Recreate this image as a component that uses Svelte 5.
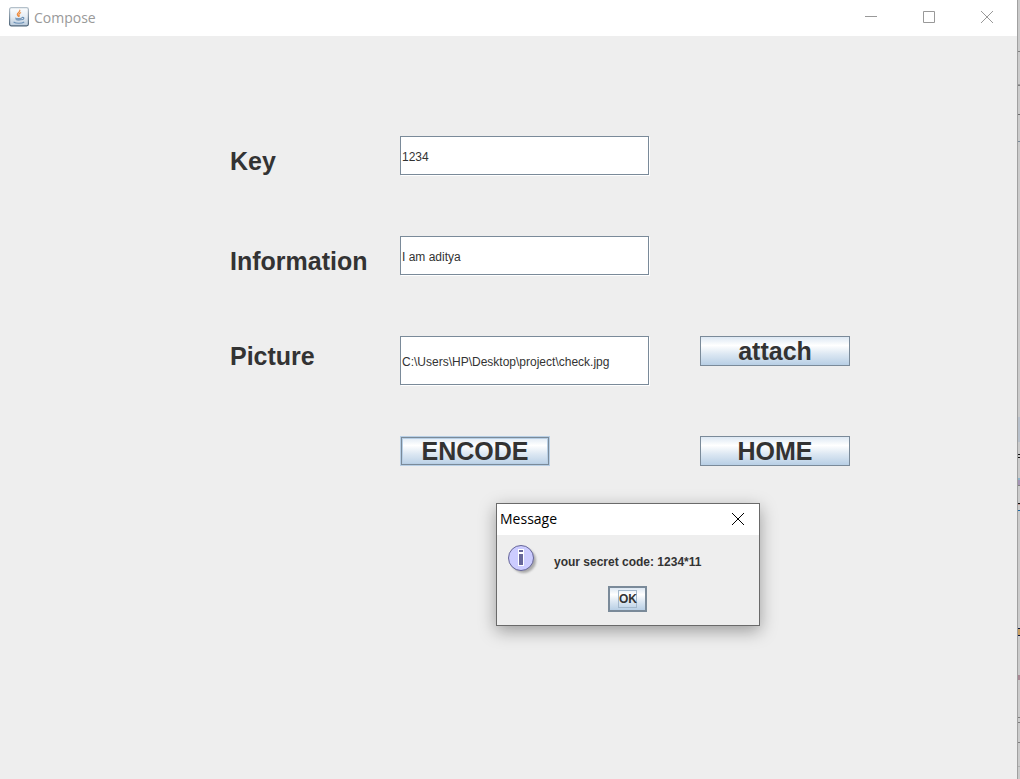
<script>
  let key = $state('1234');
  let info = $state('I am aditya');
  let picture = $state('C:\\Users\\HP\\Desktop\\project\\check.jpg');
  let open = $state(true);

  // slivers of the window that lies behind: [top, height, colour]
  const slivers = [
    [51, 1, '#808080'], [84, 1, '#a0a0a0'], [85, 1, '#808080'], [114, 1, '#6e6e6e'],
    [141, 1, '#7a8a99'], [417, 25, '#b8c0ca'], [454, 1, '#111'], [457, 1, '#111'],
    [478, 2, '#8fb4c8'], [480, 5, '#a595b4'], [485, 1, '#808080'], [503, 1, '#111'],
    [504, 1, '#c49a92'], [510, 1, '#1667a8'], [628, 1, '#101a3c'], [629, 6, '#c99f62'],
    [635, 1, '#101a3c'], [675, 5, '#a98a96'], [717, 1, '#808080'], [722, 1, '#808080'],
    [742, 1, '#808080'], [766, 1, '#b0b0b0']
  ];
</script>

<div class="screen">
  <main class="window">
    <header class="titlebar">
      <svg class="java" width="20" height="20" viewBox="0 0 20 20" aria-hidden="true">
        <defs>
          <linearGradient id="tile" x1="0" y1="0" x2="0" y2="1">
            <stop offset="0" stop-color="#fdfeff" />
            <stop offset="0.5" stop-color="#e6edf4" />
            <stop offset="1" stop-color="#b9cadb" />
          </linearGradient>
          <linearGradient id="rim" x1="0" y1="0" x2="0" y2="1">
            <stop offset="0" stop-color="#b4c0ca" />
            <stop offset="1" stop-color="#4c6378" />
          </linearGradient>
        </defs>
        <rect x="0.6" y="0.6" width="18.8" height="18.2" rx="1.8" fill="url(#tile)" stroke="url(#rim)" stroke-width="1.2" />
        <path d="M10.800 3.200c.8 1.700-3 2.600-2.500 4.400.2.800.8 1.200 1.200 1.800M11.600 5.800c-1.400.7-2.100 1.300-1.600 2.200.3.600.4.900 0 1.500" fill="none" stroke="#ef8a3c" stroke-width="1.200" stroke-linecap="round" />
        <path d="M6 10.500c2 .8 5 .8 7 0l-.6 2.600c-1.600.7-4.200.7-5.600 0z" fill="#7d9dbe" />
        <path d="M13 10.500c2.600-.6 2.400 2-.4 2.300M5 15.200c1.800 1.300 8 1.300 9.800 0" fill="none" stroke="#6b90b6" stroke-width="1.100" stroke-linecap="round" />
      </svg>
      <h1>Compose</h1>
      <div class="controls">
        <button type="button" aria-label="Minimize">
          <svg width="12" height="12" viewBox="0 0 12 12"><path d="M0 5.500h12" /></svg>
        </button>
        <button type="button" aria-label="Maximize">
          <svg width="12" height="12" viewBox="0 0 12 12"><path d="M.5.5h11v11H.5z" /></svg>
        </button>
        <button type="button" aria-label="Close">
          <svg width="12" height="12" viewBox="0 0 12 12"><path d="M0 0l12 12M12 0L0 12" /></svg>
        </button>
      </div>
    </header>

    <form class="form" onsubmit={(e) => e.preventDefault()}>
      <label for="key">Key</label>
      <input id="key" type="text" bind:value={key} />

      <label for="info">Information</label>
      <input id="info" type="text" bind:value={info} />

      <label class="short" for="picture">Picture</label>
      <input class="tall" id="picture" type="text" bind:value={picture} />
      <button class="metal" type="button">attach</button>

      <button class="metal active" type="button" onclick={() => (open = true)}>ENCODE</button>
      <button class="metal" type="button">HOME</button>
    </form>

    {#if open}
      <div class="dialog" role="dialog" aria-labelledby="dialog-title">
        <div class="dialog-bar">
          <h2 id="dialog-title">Message</h2>
          <button type="button" aria-label="Close message" onclick={() => (open = false)}>
            <svg width="12" height="12" viewBox="0 0 12 12"><path d="M0 0l12 12M12 0L0 12" /></svg>
          </button>
        </div>
        <div class="dialog-body">
          <div class="message">
            <svg width="32" height="32" viewBox="0 0 32 32" aria-hidden="true">
              <defs>
                <filter id="soft" x="-20%" y="-20%" width="140%" height="140%"><feGaussianBlur stdDeviation="1.2" /></filter>
              </defs>
              <circle cx="16.500" cy="16.500" r="12.500" fill="#8c8c8c" opacity="0.7" filter="url(#soft)" />
              <circle cx="14" cy="14" r="12.500" fill="#ccccff" stroke="#666699" />
              <path d="M11 5h6v17h-6z" fill="#fff" />
              <path d="M12 6h4v2h-4zM12 10h4v11h-4z" fill="#666699" />
            </svg>
            <p>your secret code: 1234*11</p>
          </div>
          <button class="ok" type="button" onclick={() => (open = false)}><span>OK</span></button>
        </div>
      </div>
    {/if}
  </main>

  <aside class="behind" aria-hidden="true">
    <svg width="2" height="779" viewBox="0 0 2 779" shape-rendering="crispEdges">
      {#each slivers as [y, h, fill]}
        <rect x="0" {y} width="2" height={h} {fill} />
      {/each}
    </svg>
  </aside>
</div>

<style>
  :global(body) {
    margin: 0;
    background: #eee;
  }

  .screen {
    display: flex;
    min-height: 100vh;
    overflow: hidden;
    font-family: "Liberation Sans", Arial, sans-serif;
    color: #333;
  }

  .window {
    position: relative;
    flex: 1;
    min-width: 0;
    background: #eee;
  }

  .behind {
    flex: none;
    height: 100vh;
    overflow: hidden;
    border-left: 1px solid #a0a0a0;
    background: #cbcbcb;
  }

  .behind svg {
    display: block;
  }

  h1, h2, p {
    margin: 0;
    font-weight: 400;
  }

  button {
    box-sizing: border-box;
    padding: 0;
    font-family: inherit;
    color: inherit;
  }

  .titlebar {
    display: flex;
    align-items: center;
    height: 36px;
    background: #fff;
  }

  .java {
    margin: 0 5px 2px 9px;
  }

  h1, h2 {
    padding-bottom: 1px;
    font-family: "Open Sans", "Noto Sans", sans-serif;
    font-size: 14px;
    line-height: 20px;
  }

  h1 {
    flex: 1;
    color: #999;
  }

  .controls {
    display: flex;
    align-self: stretch;
    padding-right: 1px;
  }

  .controls button,
  .dialog-bar button {
    display: flex;
    align-items: center;
    justify-content: center;
    border: 0;
    background: none;
  }

  .controls button {
    width: 58px;
    padding-bottom: 2px;
  }

  .controls svg {
    fill: none;
    stroke: #999;
  }

  .form {
    display: grid;
    grid-template-columns: 170px 250px 50px 150px;
    grid-auto-rows: 100px;
    align-items: start;
    padding: 100px 0 0 230px;
  }

  label {
    grid-column: 1;
    font-size: 25px;
    font-weight: 700;
    line-height: 50px;
  }

  .short {
    line-height: 40px;
  }

  input {
    box-sizing: border-box;
    width: 249px;
    height: 39px;
    padding: 2px 1px 0;
    border: 1px solid #7a8a99;
    border-radius: 0;
    outline: 0;
    background: #fff;
    box-shadow: 1px 1px #fff;
    font-family: inherit;
    font-size: 12px;
    color: #333;
  }

  .tall {
    height: 49px;
  }

  .metal,
  .ok {
    border: 1px solid #7a8a99;
    background: linear-gradient(#dde8f3, #fff 30%, #dde8f3 60%, #b8cfe5);
    font-weight: 700;
  }

  .metal {
    grid-column: 4;
    width: 150px;
    height: 30px;
    font-size: 25px;
    line-height: 28px;
  }

  .active {
    grid-column: 2;
    border-color: #b8cfe5;
    box-shadow: inset 0 0 0 1px #7a8a99, inset 0 0 0 2px #b8cfe5;
  }

  .dialog {
    position: absolute;
    top: 503px;
    left: 496px;
    box-sizing: border-box;
    width: 264px;
    border: 1px solid #6a6a6a;
    background: #eee;
    box-shadow: 0 5px 16px rgba(0, 0, 0, 0.35);
  }

  .dialog-bar {
    display: flex;
    align-items: center;
    justify-content: space-between;
    height: 31px;
    padding-left: 3px;
    background: #fff;
    color: #000;
  }

  .dialog-bar button {
    width: 42px;
    height: 31px;
    padding-bottom: 1px;
  }

  .dialog-bar svg {
    overflow: visible;
    stroke: #000;
  }

  .dialog-body {
    display: flex;
    flex-direction: column;
    align-items: center;
    gap: 10px;
    padding: 9px 11px 13px 10px;
  }

  .message {
    display: flex;
    align-items: center;
    align-self: stretch;
    gap: 15px;
  }

  .message p {
    padding-top: 4px;
    font-size: 12px;
    font-weight: 700;
    line-height: 16px;
  }

  .ok {
    width: 39px;
    height: 26px;
    border-width: 2px;
    font-size: 12px;
  }

  .ok span {
    display: block;
    width: 17px;
    margin: 0 auto;
    border: 1px solid #a3b8cc;
    line-height: 16px;
  }
</style>
